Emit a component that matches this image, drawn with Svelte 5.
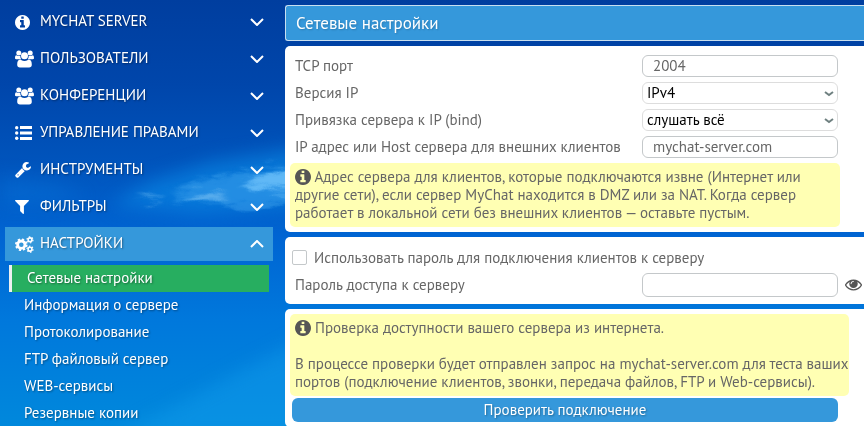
<script>
  let openMenu = 'НАСТРОЙКИ';
  let activePage = 'Сетевые настройки';
  let port = '2004';
  let ipVersion = 'IPv4';
  let bindIp = 'слушать всё';
  let host = 'mychat-server.com';
  let usePassword = false;
  let password = '';
  let showPassword = false;

  const menu = [
    { title: 'MYCHAT SERVER', icon: 'info' },
    { title: 'ПОЛЬЗОВАТЕЛИ', icon: 'users' },
    { title: 'КОНФЕРЕНЦИИ', icon: 'users' },
    { title: 'УПРАВЛЕНИЕ ПРАВАМИ', icon: 'list' },
    { title: 'ИНСТРУМЕНТЫ', icon: 'wrench' },
    { title: 'ФИЛЬТРЫ', icon: 'filter' },
    {
      title: 'НАСТРОЙКИ',
      icon: 'cogs',
      pages: ['Сетевые настройки', 'Информация о сервере', 'Протоколирование', 'FTP файловый сервер', 'WEB-сервисы', 'Резервные копии']
    }
  ];

  const infoPath = 'M1024 1376v-160q0-14-9-23t-23-9h-96v-512q0-14-9-23t-23-9h-320q-14 0-23 9t-9 23v160q0 14 9 23t23 9h96v320h-96q-14 0-23 9t-9 23v160q0 14 9 23t23 9h448q14 0 23-9t9-23zm-128-896v-160q0-14-9-23t-23-9h-192q-14 0-23 9t-9 23v160q0 14 9 23t23 9h192q14 0 23-9t9-23zm640 416q0 209-103 385.5t-279.5 279.5-385.5 103-385.5-103-279.5-279.5-103-385.5 103-385.5 279.5-279.5 385.5-103 385.5 103 279.5 279.5 103 385.5z';

  function toggleMenu(title) {
    openMenu = openMenu === title ? '' : title;
  }
</script>

<div class="shell">
  <svg class="sky" aria-hidden="true">
    <defs>
      <filter id="haze" x="-20%" y="-40%" width="140%" height="180%" color-interpolation-filters="sRGB">
        <feGaussianBlur stdDeviation="9" />
      </filter>
      <filter id="wisp" x="-20%" y="-40%" width="140%" height="180%" color-interpolation-filters="sRGB">
        <feGaussianBlur stdDeviation="4 2" result="soft" />
        <feTurbulence type="fractalNoise" baseFrequency="0.03 0.09" numOctaves="4" seed="4" result="noise" />
        <feDisplacementMap in="soft" in2="noise" scale="22" xChannelSelector="R" yChannelSelector="G" />
      </filter>
    </defs>
    <g filter="url(#haze)">
      <path d="M110 205 L150 182 L210 162 L300 148 L300 206 L200 214 Z" fill="#0a8ae6" opacity="0.6" />
      <path d="M0 176 L50 182 L90 194 L50 204 L0 206 Z" fill="#0a7fe0" opacity="0.3" />
      <path d="M110 440 L300 340 L300 440 Z" fill="#14a0ee" opacity="0.4" />
    </g>
    <g filter="url(#wisp)">
      <path d="M170 192 L205 178 L300 162 L300 200 L250 208 L200 204 Z" fill="#3fa4ee" opacity="0.5" />
      <path d="M240 184 L262 174 L310 164 L310 190 L275 192 Z" fill="#7cccff" opacity="0.7" />
      <ellipse cx="208" cy="196" rx="18" ry="5" fill="#7cc2f4" opacity="0.6" />
      <ellipse cx="148" cy="198" rx="9" ry="2" fill="#7cc2f4" opacity="0.6" />
    </g>
  </svg>

  <nav class="sidebar">
    {#each menu as item}
      <button class="menu-item" class:open={openMenu === item.title} type="button" on:click={() => toggleMenu(item.title)}>
        <span class="menu-icon">
          {#if item.icon === 'info'}
            <svg width="15" height="15" viewBox="0 128 1536 1536"><path d={infoPath} /></svg>
          {:else if item.icon === 'users'}
            <svg width="19" height="18" viewBox="0 0 19 18">
              <circle cx="3.8" cy="3" r="2.5" />
              <circle cx="15.2" cy="3" r="2.5" />
              <path d="M0 8.2c0-1.800.5-3 1.300-3 .6 0 1.300.9 2.600.9.600 0 1.100-.1 1.500-.3-.2 1.600.2 2.700.9 3.500H2C.8 9.300 0 9 0 8.200zM19 8.200c0-1.800-.5-3-1.300-3-.6 0-1.300.9-2.600.9-.6 0-1.100-.1-1.500-.3.2 1.600-.2 2.700-.9 3.500H17c1.200 0 2-.3 2-1.100z" />
              <circle cx="9.500" cy="5.800" r="3.500" />
              <path d="M2.200 14.800c0-3 .8-5.200 3-5.200.6 0 1.800 1.500 4.300 1.500s3.700-1.500 4.300-1.500c2.200 0 3 2.200 3 5.200 0 1.900-1.100 2.700-2.700 2.700H4.900c-1.600 0-2.700-.8-2.700-2.700z" />
            </svg>
          {:else if item.icon === 'list'}
            <svg width="17" height="14" viewBox="0 0 17 14">
              <circle cx="1.700" cy="1.700" r="1.700" /><circle cx="1.700" cy="7" r="1.700" /><circle cx="1.700" cy="12.300" r="1.700" />
              <path d="M5 0h12v3H5zM5 5.500h12v3H5zM5 11h12v3H5z" />
            </svg>
          {:else if item.icon === 'wrench'}
            <svg width="16" height="16" viewBox="64 128 1664 1664">
              <path d="M448 1472q0-26-19-45t-45-19-45 19-19 45 19 45 45 19 45-19 19-45zm644-420l-682 682q-37 37-90 37-52 0-91-37l-106-108q-38-36-38-90 0-53 38-91l681-681q39 98 114.5 173.5t173.5 114.5zm634-435q0 39-23 106-47 134-164.5 217.5t-258.5 83.5q-185 0-316.5-131.5t-131.5-316.5 131.5-316.5 316.5-131.5q58 0 121.5 16.5t107.5 46.5q16 11 16 28t-16 28l-293 169v224l193 107q5-3 79-48.500t135.500-81 70.500-35.500q15 0 23.500 10t8.500 25z" />
            </svg>
          {:else if item.icon === 'filter'}
            <svg width="14" height="14" viewBox="192 256 1408 1408">
              <path d="M1595 295q17 41-14 70l-493 493v742q0 42-39 59-13 5-25 5-27 0-45-19l-256-256q-19-19-19-45v-486l-493-493q-31-29-14-70 17-39 59-39h1280q42 0 59 39z" />
            </svg>
          {:else}
            <svg class="cogs" width="19" height="17" viewBox="0 0 19 17">
              <circle cx="6.300" cy="8.700" r="3.700" stroke-width="2.800" />
              <circle cx="6.300" cy="8.700" r="5.400" stroke-width="1.800" stroke-dasharray="2.200 2.041" />
              <circle cx="15" cy="3.800" r="1.900" stroke-width="1.600" />
              <circle cx="15" cy="3.800" r="3" stroke-width="1.200" stroke-dasharray="1.500 1.642" />
              <circle cx="15" cy="13.200" r="1.900" stroke-width="1.600" />
              <circle cx="15" cy="13.200" r="3" stroke-width="1.200" stroke-dasharray="1.500 1.642" />
            </svg>
          {/if}
        </span>
        <span class="menu-title">{item.title}</span>
        <svg class="chevron" width="14" height="8" viewBox="0 0 14 8">
          <path d={openMenu === item.title ? 'M1 7l6-6 6 6' : 'M1 1l6 6 6-6'} />
        </svg>
      </button>
      {#if item.pages && openMenu === item.title}
        <ul class="pages">
          {#each item.pages as page}
            <li><a href="#page" class:active={activePage === page} on:click|preventDefault={() => (activePage = page)}>{page}</a></li>
          {/each}
        </ul>
      {/if}
    {/each}
  </nav>

  <main class="content">
    <h1>Сетевые настройки</h1>

    <section class="panel">
      <div class="row">
        <label for="port">TCP порт</label>
        <input id="port" type="text" bind:value={port}>
      </div>
      <div class="row">
        <label for="ip-version">Версия IP</label>
        <div class="select">
          <select id="ip-version" bind:value={ipVersion}>
            <option>IPv4</option>
            <option>IPv6</option>
          </select>
          <svg width="10" height="6" viewBox="0 0 10 6"><path d="M1 1l4 3 4-3" /></svg>
        </div>
      </div>
      <div class="row">
        <label for="bind-ip">Привязка сервера к IP (bind)</label>
        <div class="select">
          <select id="bind-ip" bind:value={bindIp}>
            <option>слушать всё</option>
            <option>127.0.0.1</option>
          </select>
          <svg width="10" height="6" viewBox="0 0 10 6"><path d="M1 1l4 3 4-3" /></svg>
        </div>
      </div>
      <div class="row">
        <label for="host">IP адрес или Host сервера для внешних клиентов</label>
        <input id="host" type="text" bind:value={host}>
      </div>
      <p class="note">
        <svg width="16" height="16" viewBox="0 128 1536 1536"><path d={infoPath} /></svg>
        Адрес сервера для клиентов, которые подключаются извне (Интернет или<br>
        другие сети), если сервер MyChat находится в DMZ или за NAT. Когда сервер<br>
        работает в локальной сети без внешних клиентов — оставьте пустым.
      </p>
    </section>

    <section class="panel access">
      <div class="check">
        <input id="use-password" type="checkbox" bind:checked={usePassword}>
        <label for="use-password">Использовать пароль для подключения клиентов к серверу</label>
      </div>
      <div class="row">
        <label for="password">Пароль доступа к серверу</label>
        <input id="password" class="tall" type={showPassword ? 'text' : 'password'} value={password} on:input={(e) => (password = e.currentTarget.value)}>
        <button class="eye" type="button" aria-label="Показать пароль" on:click={() => (showPassword = !showPassword)}>
          <svg width="17" height="12" viewBox="0 384 1792 1152">
            <path d="M1664 960q-152-236-381-353 61 104 61 225 0 185-131.500 316.500t-316.500 131.500-316.500-131.500-131.500-316.500q0-121 61-225-229 117-381 353 133 205 333.500 326.500t434.500 121.500 434.500-121.500 333.500-326.500zm-720-384q0-20-14-34t-34-14q-125 0-214.500 89.500t-89.500 214.500q0 20 14 34t34 14 34-14 14-34q0-86 61-147t147-61q20 0 34-14t14-34zm848 384q0 34-20 69-140 230-376.500 368.500t-499.500 138.500-499.500-139-376.500-368q-20-35-20-69t20-69q140-229 376.500-368t499.500-139 499.500 139 376.500 368q20 35 20 69z" />
          </svg>
        </button>
      </div>
    </section>

    <section class="panel check-panel">
      <p class="note">
        <svg width="16" height="16" viewBox="0 128 1536 1536"><path d={infoPath} /></svg>
        Проверка доступности вашего сервера из интернета.<br>
        <br>
        В процессе проверки будет отправлен запрос на mychat-server.com для теста ваших<br>
        портов (подключение клиентов, звонки, передача файлов, FTP и Web-сервисы).
      </p>
      <button class="test" type="button">Проверить подключение</button>
    </section>
  </main>
</div>

<style>
  :global(body) {
    overflow: hidden;
  }

  .shell {
    position: relative;
    display: flex;
    height: 100vh;
    overflow: hidden;
    font-family: 'PT Sans', 'Noto Sans', sans-serif;
    font-size: 15px;
    line-height: 18px;
    color: #666;
    background: linear-gradient(to bottom, #003e9f 0%, #0046ab 20%, #0054bc 38%, #0064d2 55%, #0078dc 75%, #0088dc 100%);
  }

  .sky {
    position: absolute;
    inset: 0;
    width: 100%;
    height: 100%;
  }

  .sidebar {
    position: relative;
    flex: 0 0 268px;
    padding: 5px;
  }

  button, input, select {
    font: inherit;
    margin: 0;
    box-sizing: border-box;
  }

  .menu-item {
    display: flex;
    align-items: center;
    width: 100%;
    height: 34px;
    margin-bottom: 3px;
    padding: 0 9px 0 10px;
    border: none;
    background: none;
    color: white;
    text-align: left;
    text-shadow: 1px 1px 2px rgba(0, 0, 0, 0.4);
    cursor: pointer;
  }

  .menu-item.open {
    background: #3598db;
  }

  .menu-icon {
    display: flex;
    width: 25px;
    fill: white;
  }

  .cogs {
    fill: none;
    stroke: white;
  }

  .menu-title {
    flex: 1;
    padding-bottom: 2px;
    white-space: nowrap;
  }

  .chevron {
    fill: none;
    stroke: white;
    stroke-width: 2;
  }

  .pages {
    margin: 0;
    padding: 1px 4px 0;
    list-style: none;
  }

  .pages a {
    display: block;
    padding: 4px 15px 5px;
    color: white;
    text-decoration: none;
    text-shadow: 1px 1px 2px rgba(0, 0, 0, 0.4);
  }

  .pages a.active {
    border-left: 3px solid #ecf0f1;
    background: #27ae60;
  }

  .content {
    position: relative;
    flex: 1;
    min-width: 0;
    padding: 5px 0 0 7px;
  }

  h1 {
    margin: 0 0 5px;
    padding: 8px 10px;
    border: 1px solid #c8dff0;
    border-right: none;
    border-radius: 3px 0 0 3px;
    background: #3598db;
    color: white;
    font-size: 17px;
    font-weight: normal;
    text-shadow: 1px 1px 2px rgba(0, 0, 0, 0.2);
  }

  .panel {
    margin-bottom: 5px;
    padding: 6px 0 5px 5px;
    border-radius: 5px 0 0 5px;
    background: white;
  }

  .panel.access {
    padding-top: 7px;
    padding-bottom: 6px;
  }

  .panel.check-panel {
    padding-top: 5px;
  }

  .row {
    display: grid;
    grid-template-columns: 1fr 196px 26px;
    align-items: center;
    height: 27px;
    padding-left: 5px;
  }

  .row input {
    width: 100%;
    height: 22px;
    padding: 0 10px;
    border: 1px solid #c4c8ca;
    border-radius: 6px;
    background: white;
    color: #666;
    outline: none;
  }

  .row input.tall {
    height: 24px;
  }

  .select {
    position: relative;
  }

  select {
    display: block;
    width: 100%;
    height: 22px;
    padding: 0 4px;
    border: 1px solid #ddd;
    border-radius: 6px;
    background: white;
    color: black;
    appearance: none;
    outline: none;
  }

  .select svg {
    position: absolute;
    top: 9px;
    right: 4px;
    fill: none;
    stroke: #6f8080;
    stroke-width: 2;
    pointer-events: none;
  }

  .note {
    box-sizing: border-box;
    width: fit-content;
    min-width: calc(100% - 24px);
    margin: 3px 0 0;
    padding: 5px 0 5px 5px;
    border-radius: 5px;
    background: #ffffb3;
    white-space: nowrap;
  }

  .check-panel .note {
    margin-top: 0;
  }

  .note svg {
    vertical-align: -3px;
    fill: #555;
  }

  .check {
    display: flex;
    align-items: center;
    gap: 7px;
    height: 27px;
    padding-left: 2px;
  }

  .check input {
    width: 15px;
    height: 15px;
    border: 1px solid #c4c8ca;
    border-radius: 2px;
    background: white;
    appearance: none;
  }

  .check input:checked {
    background: #3598db;
  }

  .eye {
    display: flex;
    padding: 0 0 0 7px;
    border: none;
    background: none;
    cursor: pointer;
  }

  .eye svg {
    fill: #555;
  }

  .test {
    display: block;
    width: calc(100% - 28px);
    height: 24px;
    margin: 2px 0 0 2px;
    border: none;
    border-radius: 6px;
    background: #3598db;
    color: white;
    text-shadow: 1px 1px 2px rgba(0, 0, 0, 0.3);
    cursor: pointer;
  }
</style>
